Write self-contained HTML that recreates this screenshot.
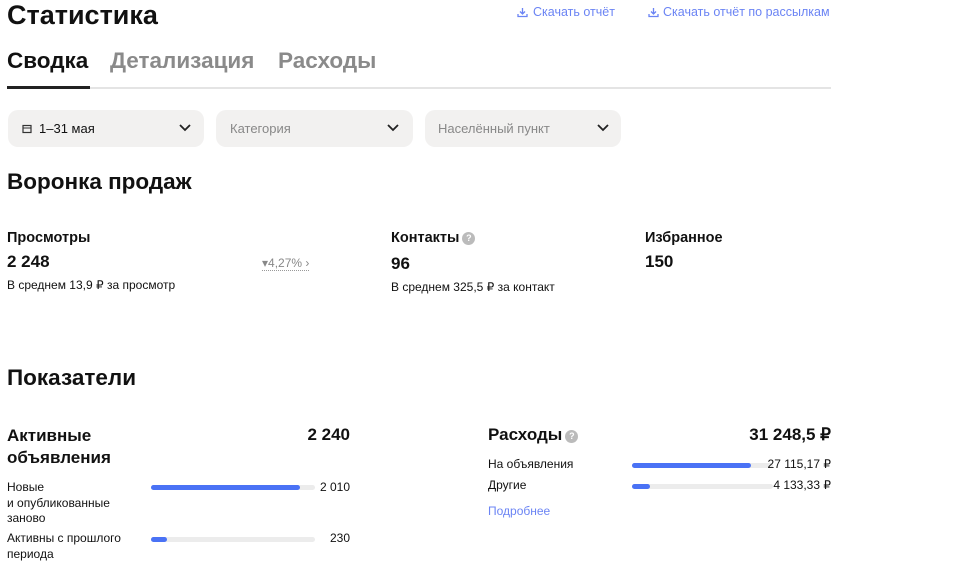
<!DOCTYPE html>
<html><head><meta charset="utf-8"><style>
body{margin:0;width:965px;height:572px;background:#fff;font-family:"Liberation Sans",sans-serif;color:#111;position:relative;overflow:hidden}
.a{position:absolute;white-space:nowrap}
.b{font-weight:bold}
.dd{position:absolute;top:110px;height:37px;background:#f2f1f0;border-radius:10px;font-size:13px}
.dd span{position:absolute;top:11px}
.chev{position:absolute;top:14px;width:12px;height:8px}
.track{position:absolute;height:5px;background:#ececec;border-radius:3px}
.fill{position:absolute;left:0;top:0;height:5px;background:#4a72f5;border-radius:3px}
.lnk{color:#6b84f4;font-size:12.5px}
.q{display:inline-block;width:13px;height:13px;border-radius:50%;background:#bbb;color:#fff;font-size:9px;text-align:center;line-height:13px;vertical-align:1px;margin-left:3px}
.s{font-size:12px}
</style></head><body>
<div class="a b" style="left:7px;top:0px;font-size:27px">Статистика</div>
<svg class="a" style="left:517px;top:7px" width="11" height="11" viewBox="0 0 11 11"><path d="M5.5 1v6M3 4.5l2.5 2.5L8 4.5M1 7v2.5h9V7" fill="none" stroke="#6b84f4" stroke-width="1.3"/></svg>
<div class="a lnk" style="left:533px;top:5px">Скачать отчёт</div>
<svg class="a" style="left:648px;top:7px" width="11" height="11" viewBox="0 0 11 11"><path d="M5.5 1v6M3 4.5l2.5 2.5L8 4.5M1 7v2.5h9V7" fill="none" stroke="#6b84f4" stroke-width="1.3"/></svg>
<div class="a lnk" style="left:663px;top:5px">Скачать отчёт по рассылкам</div>
<div class="a b" style="left:7px;top:48px;font-size:22.5px">Сводка</div>
<div class="a b" style="left:110px;top:48px;font-size:22.5px;color:#8a8a8a">Детализация</div>
<div class="a b" style="left:278px;top:48px;font-size:22.5px;color:#8a8a8a">Расходы</div>
<div class="a" style="left:7px;top:87px;width:824px;height:2px;background:#e4e4e4"></div>
<div class="a" style="left:7px;top:86px;width:83px;height:3px;background:#222"></div>
<div class="dd" style="left:8px;width:196px"><svg class="a" style="left:14px;top:14px" width="10" height="10" viewBox="0 0 10 10"><rect x="1" y="1.5" width="8" height="7" fill="none" stroke="#333" stroke-width="1.2"/><path d="M1 4h8" stroke="#333"/></svg><span style="left:31px">1–31 мая</span><svg class="chev" style="left:171px" viewBox="0 0 12 8"><path d="M1 1l5 5 5-5" fill="none" stroke="#222" stroke-width="1.8"/></svg></div>
<div class="dd" style="left:216px;width:197px"><span style="left:14px;color:#888">Категория</span><svg class="chev" style="left:171px" viewBox="0 0 12 8"><path d="M1 1l5 5 5-5" fill="none" stroke="#222" stroke-width="1.8"/></svg></div>
<div class="dd" style="left:425px;width:196px"><span style="left:13px;color:#888">Населённый пункт</span><svg class="chev" style="left:172px" viewBox="0 0 12 8"><path d="M1 1l5 5 5-5" fill="none" stroke="#222" stroke-width="1.8"/></svg></div>
<div class="a b" style="left:7px;top:169px;font-size:22.5px">Воронка продаж</div>
<div class="a b" style="left:7px;top:230px;font-size:14.5px">Просмотры</div>
<div class="a b" style="left:7px;top:252px;font-size:17px">2 248</div>
<div class="a s" style="left:7px;top:278px">В среднем 13,9 ₽ за просмотр</div>
<div class="a" style="left:262px;top:256px;font-size:12px;color:#888;border-bottom:1px dotted #999">▾4,27% ›</div>
<div class="a b" style="left:391px;top:230px;font-size:14.5px">Контакты<span class="q">?</span></div>
<div class="a b" style="left:391px;top:254px;font-size:17px">96</div>
<div class="a s" style="left:391px;top:280px">В среднем 325,5 ₽ за контакт</div>
<div class="a b" style="left:645px;top:230px;font-size:14.5px">Избранное</div>
<div class="a b" style="left:645px;top:252px;font-size:17px">150</div>
<div class="a b" style="left:7px;top:365px;font-size:22.5px">Показатели</div>
<div class="a b" style="left:7px;top:425px;font-size:17px;line-height:22px">Активные<br>объявления</div>
<div class="a b" style="left:250px;width:100px;text-align:right;top:425px;font-size:17px">2 240</div>
<div class="a s" style="left:7px;top:480px;line-height:15.5px">Новые<br>и опубликованные<br>заново</div>
<div class="track" style="left:151px;top:485px;width:164px"><div class="fill" style="width:149px"></div></div>
<div class="a s" style="left:290px;width:60px;text-align:right;top:480px">2 010</div>
<div class="a s" style="left:7px;top:531px;line-height:15.5px">Активны с прошлого<br>периода</div>
<div class="track" style="left:151px;top:537px;width:164px"><div class="fill" style="width:16px"></div></div>
<div class="a s" style="left:290px;width:60px;text-align:right;top:531px">230</div>
<div class="a b" style="left:488px;top:425px;font-size:17px">Расходы<span class="q">?</span></div>
<div class="a b" style="left:700px;width:131px;text-align:right;top:425px;font-size:17px">31 248,5 ₽</div>
<div class="a s" style="left:488px;top:457px">На объявления</div>
<div class="track" style="left:632px;top:463px;width:141px"><div class="fill" style="width:119px"></div></div>
<div class="a s" style="left:740px;width:91px;text-align:right;top:457px">27 115,17 ₽</div>
<div class="a s" style="left:488px;top:478px">Другие</div>
<div class="track" style="left:632px;top:484px;width:141px"><div class="fill" style="width:18px"></div></div>
<div class="a s" style="left:740px;width:91px;text-align:right;top:478px">4 133,33 ₽</div>
<div class="a lnk" style="left:488px;top:504px;font-size:12px">Подробнее</div>
</body></html>
